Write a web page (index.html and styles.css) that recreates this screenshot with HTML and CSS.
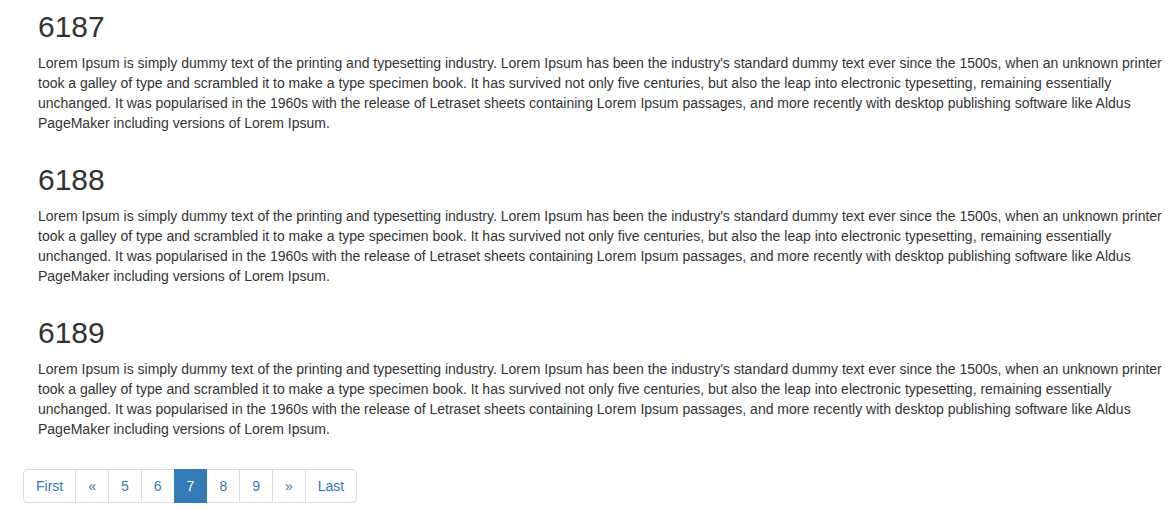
FILE: index.html
```html
<!DOCTYPE html>
<html>
<head>
<meta charset="utf-8">
<link rel="stylesheet" href="styles.css">
</head>
<body>
<div class="page">
  <div class="list">
    <div class="item">
      <h2>6187</h2>
      <p>Lorem Ipsum is simply dummy text of the printing and typesetting industry. Lorem Ipsum has been the industry's standard dummy text ever since the 1500s, when an unknown printer took a galley of type and scrambled it to make a type specimen book. It has survived not only five centuries, but also the leap into electronic typesetting, remaining essentially unchanged. It was popularised in the 1960s with the release of Letraset sheets containing Lorem Ipsum passages, and more recently with desktop publishing software like Aldus PageMaker including versions of Lorem Ipsum.</p>
    </div>
    <div class="item">
      <h2>6188</h2>
      <p>Lorem Ipsum is simply dummy text of the printing and typesetting industry. Lorem Ipsum has been the industry's standard dummy text ever since the 1500s, when an unknown printer took a galley of type and scrambled it to make a type specimen book. It has survived not only five centuries, but also the leap into electronic typesetting, remaining essentially unchanged. It was popularised in the 1960s with the release of Letraset sheets containing Lorem Ipsum passages, and more recently with desktop publishing software like Aldus PageMaker including versions of Lorem Ipsum.</p>
    </div>
    <div class="item">
      <h2>6189</h2>
      <p>Lorem Ipsum is simply dummy text of the printing and typesetting industry. Lorem Ipsum has been the industry's standard dummy text ever since the 1500s, when an unknown printer took a galley of type and scrambled it to make a type specimen book. It has survived not only five centuries, but also the leap into electronic typesetting, remaining essentially unchanged. It was popularised in the 1960s with the release of Letraset sheets containing Lorem Ipsum passages, and more recently with desktop publishing software like Aldus PageMaker including versions of Lorem Ipsum.</p>
    </div>
  </div>
  <ul class="pagination">
    <li><a href="#">First</a></li>
    <li><a href="#">&laquo;</a></li>
    <li><a href="#">5</a></li>
    <li><a href="#">6</a></li>
    <li class="active"><a href="#">7</a></li>
    <li><a href="#">8</a></li>
    <li><a href="#">9</a></li>
    <li><a href="#">&raquo;</a></li>
    <li><a href="#">Last</a></li>
  </ul>
</div>
</body>
</html>
```
FILE: styles.css
```css
* { box-sizing: border-box; }
html, body { margin: 0; padding: 0; background: #fff; }
body {
  font-family: "Liberation Sans", Arial, Helvetica, sans-serif;
  font-size: 14px;
  line-height: 20px;
  color: #333;
}
.page {
  padding: 0 0 0 23px;
}
.list {
  padding: 0 6px 0 15px;
}
.item {
  display: flow-root;
}
.item h2 {
  font-size: 30px;
  font-weight: 500;
  line-height: 33px;
  margin: 20px 0 10px;
  color: #333;
}
.item:first-child h2 {
  margin-top: 10px;
}
.item p {
  margin: 0 0 10px;
}
.pagination {
  display: inline-flex;
  list-style: none;
  margin: 20px 0;
  padding: 0;
  border-radius: 4px;
}
.pagination li a {
  display: block;
  padding: 6px 12px;
  line-height: 20px;
  font-size: 14px;
  color: #337ab7;
  text-decoration: none;
  background: #fff;
  border: 1px solid #ddd;
  margin-left: -1px;
}
.pagination li:first-child a {
  margin-left: 0;
  border-radius: 4px 0 0 4px;
}
.pagination li:last-child a {
  border-radius: 0 4px 4px 0;
}
.pagination li.active a {
  background: #337ab7;
  border-color: #337ab7;
  color: #fff;
  position: relative;
  z-index: 1;
}
```
